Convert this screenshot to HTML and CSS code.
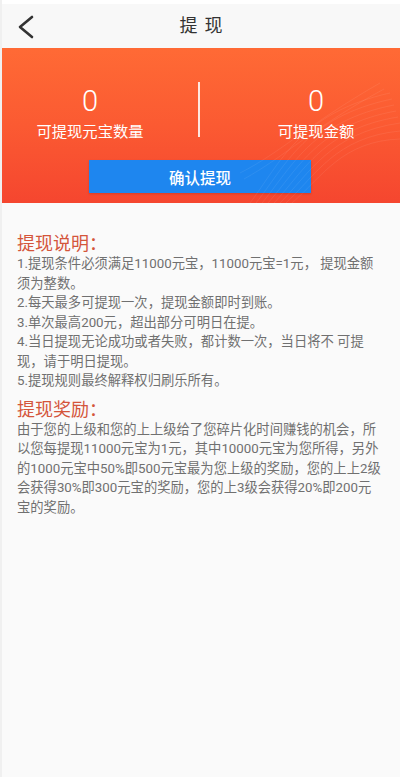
FILE: index.html
```html
<!DOCTYPE html>
<html lang="zh">
<head>
<meta charset="utf-8">
<title>提现</title>
<link rel="stylesheet" href="styles.css">
</head>
<body>
<div class="page">
  <header class="nav">
    <svg class="back" width="20" height="24" viewBox="0 0 20 24"><path d="M16 2 L4 12 L16 22" fill="none" stroke="#333" stroke-width="2.6" stroke-linecap="round" stroke-linejoin="round"/></svg>
    <h1 class="nav-title">提现</h1>
  </header>
  <section class="hero">
    <svg class="waves" width="160" height="150" viewBox="0 0 160 150">
      <g fill="none" stroke="#ffffff" stroke-opacity="0.12" stroke-width="0.6">
        <path d="M10 150 C40 110 60 60 150 40"/>
        <path d="M16 150 C46 112 66 64 152 46"/>
        <path d="M22 150 C52 114 72 68 154 52"/>
        <path d="M28 150 C58 116 78 72 156 58"/>
        <path d="M34 150 C64 118 84 76 158 64"/>
        <path d="M40 150 C70 120 90 80 160 70"/>
        <path d="M46 150 C76 122 96 84 160 78"/>
        <path d="M52 150 C82 124 102 88 160 86"/>
        <path d="M0 120 C40 100 70 70 140 30"/>
        <path d="M4 126 C44 104 74 74 144 36"/>
      </g>
    </svg>
    <div class="stats">
      <div class="stat stat-left">
        <div class="num">0</div>
        <div class="label">可提现元宝数量</div>
      </div>
      <div class="divider"></div>
      <div class="stat stat-right">
        <div class="num">0</div>
        <div class="label">可提现金额</div>
      </div>
    </div>
    <div class="btn-row">
      <button class="btn">确认提现</button>
    </div>
  </section>
  <main class="content">
    <h2 class="sec-title">提现说明：</h2>
    <p class="para">1.提现条件必须满足11000元宝，11000元宝=1元， 提现金额须为整数。</p>
    <p class="para">2.每天最多可提现一次，提现金额即时到账。</p>
    <p class="para">3.单次最高200元，超出部分可明日在提。</p>
    <p class="para">4.当日提现无论成功或者失败，都计数一次，当日将不 可提现，请于明日提现。</p>
    <p class="para">5.提现规则最终解释权归刷乐所有。</p>
    <h2 class="sec-title sec-title-2">提现奖励：</h2>
    <p class="para">由于您的上级和您的上上级给了您碎片化时间赚钱的机会，所以您每提现11000元宝为1元，其中10000元宝为您所得，另外的1000元宝中50%即500元宝最为您上级的奖励，您的上上2级会获得30%即300元宝的奖励，您的上3级会获得20%即200元宝的奖励。</p>
  </main>
</div>
</body>
</html>
```
FILE: styles.css
```css
html, body {
  margin: 0;
  padding: 0;
  background: #fafafa;
}
body {
  font-family: Roboto, "Noto Sans CJK SC", sans-serif;
}
.page {
  width: 400px;
  min-height: 777px;
  display: flex;
  flex-direction: column;
  background: #fafafa;
  border-left: 2px solid #f0f0f0;
  box-sizing: border-box;
}
.nav {
  height: 48px;
  background: #f8f8f8;
  border-top: 4px solid #ffffff;
  box-sizing: border-box;
  display: flex;
  align-items: center;
  justify-content: center;
  position: relative;
}
.back {
  position: absolute;
  left: 14px;
  top: 11px;
}
.nav-title {
  margin: 0;
  font-size: 18px;
  font-weight: 400;
  color: #333;
  letter-spacing: 7px;
  padding-left: 7px;
  line-height: 24px;
}
.hero {
  height: 155px;
  background: linear-gradient(180deg, #ff6a35 0%, #fb5a32 50%, #f5462f 100%);
  position: relative;
  overflow: hidden;
  display: flex;
  flex-direction: column;
}
.waves {
  position: absolute;
  right: 0;
  bottom: 0;
}
.stats {
  display: flex;
  align-items: flex-start;
  padding-top: 34px;
  height: 112px;
  box-sizing: border-box;
}
.stat {
  display: flex;
  flex-direction: column;
  align-items: center;
  color: #fff;
}
.stat-left {
  width: 176px;
}
.stat-right {
  width: 168px;
  margin-left: auto;
  margin-right: 0;
}
.divider {
  width: 2px;
  height: 55px;
  background: rgba(255,255,255,0.85);
  margin-left: 20px;
}
.num {
  font-family: Roboto, "Noto Sans", sans-serif;
  font-weight: 300;
  font-size: 29px;
  line-height: 30px;
  margin-top: 4px;
}
.label {
  font-family: "Noto Sans CJK SC", sans-serif;
  font-size: 15.3px;
  line-height: 20px;
  margin-top: 4px;
  color: #fff;
}
.btn-row {
  display: flex;
  justify-content: flex-start;
  padding-left: 87px;
}
.btn {
  width: 222px;
  height: 33px;
  border: none;
  background: #1e86ef;
  color: #fff;
  font-family: "Noto Sans CJK SC", sans-serif;
  font-size: 15.5px;
  font-weight: 500;
  padding: 0;
  box-shadow: 0 1px 2px rgba(120,30,10,0.25);
}
.content {
  padding: 27px 17px 0 15px;
}
.sec-title {
  margin: 0;
  font-family: "Noto Sans CJK SC", sans-serif;
  font-size: 18px;
  font-weight: 400;
  color: #d4553b;
  line-height: 24px;
}
.sec-title-2 {
  margin-top: 5px;
}
.para {
  margin: 0;
  font-size: 13.3px;
  line-height: 19.5px;
  color: #707070;
}
```
